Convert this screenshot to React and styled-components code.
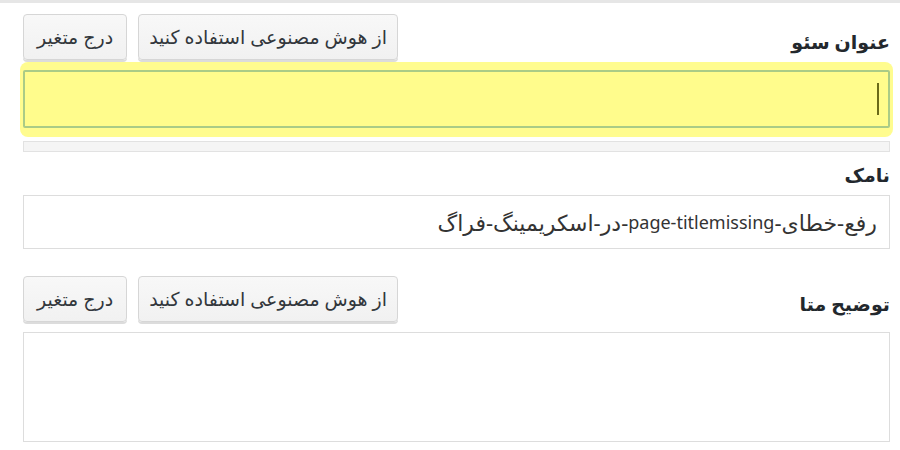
import React from 'react';
import styled, { createGlobalStyle } from 'styled-components';

// page reset and base font
const GlobalStyle = createGlobalStyle`
  html, body {
    margin: 0;
    padding: 0;
    background: #fff;
  }
  body {
    font-family: "Noto Sans", "DejaVu Sans", sans-serif;
    color: #23282d;
  }
`;

// <FieldTools>: the two helper buttons over a field
const FieldTools = () => (
  <Tools>
    <ToolButton>از هوش مصنوعی استفاده کنید</ToolButton>
    <ToolButton $pad={13}>درج متغیر</ToolButton>
  </Tools>
);

function App() {
  return (
    <>
      <GlobalStyle />
      <Page dir="rtl">
        <TopEdge />
        <Form>
          <Field>
            <FieldHead>
              <Label>عنوان سئو</Label>
              <FieldTools />
            </FieldHead>
            <Halo>
              <TitleBox role="textbox">
                <Caret />
              </TitleBox>
            </Halo>
            <Meter />
          </Field>

          <Field $gap={9}>
            <Label $block>نامک</Label>
            <SlugBox>
              رفع-خطای-<Latin>page-titlemissing</Latin>-در-اسکریمینگ-فراگ
            </SlugBox>
          </Field>

          <Field $gap={26}>
            <FieldHead>
              <Label>توضیح متا</Label>
              <FieldTools />
            </FieldHead>
            <MetaArea />
          </Field>
        </Form>
      </Page>
    </>
  );
}

// styles
const Page = styled.div`
  width: 900px;
  height: 450px;
  overflow: hidden;
  box-sizing: border-box;
`;

const TopEdge = styled.div`
  height: 3px;
  background: #e6e6e6;
`;

const Form = styled.div`
  display: flex;
  flex-direction: column;
  padding: 10px 10px 0 23px;
`;

const Field = styled.div`
  display: flex;
  flex-direction: column;
  margin-top: ${p => (p.$gap ? p.$gap + 'px' : 0)};
`;

const FieldHead = styled.div`
  display: flex;
  align-items: center;
  height: 48px;
`;

const Label = styled.div`
  font-size: 19px;
  font-weight: 600;
  line-height: 28px;
  color: #23282d;
  padding-top: ${p => (p.$block ? 0 : '10px')};
  margin-bottom: ${p => (p.$block ? '6px' : 0)};
`;

const Tools = styled.div`
  display: flex;
  gap: 11px;
  margin-right: auto;
`;

const ToolButton = styled.button`
  font-family: inherit;
  font-size: 19px;
  color: #32373c;
  height: 46px;
  padding: 0 ${p => (p.$pad || 10)}px;
  background: linear-gradient(#f8f8f8, #f1f1f1);
  border: 1px solid #d6d6d6;
  border-radius: 4px;
  box-shadow: 0 2px 0 #dcdcdc;
  cursor: pointer;
`;

const Halo = styled.div`
  margin: 1px -3px 0;
  padding: 8px 3px 9px;
  background: #fffc8f;
  border-radius: 8px;
`;

const TitleBox = styled.div`
  display: flex;
  align-items: center;
  height: 58px;
  box-sizing: border-box;
  padding: 0 9px;
  background: #fffc8c;
  border: 2px solid #aacb86;
  border-radius: 2px;
`;

const Caret = styled.span`
  width: 2px;
  height: 32px;
  background: #6a6a18;
`;

const Meter = styled.div`
  margin-top: 4px;
  height: 11px;
  box-sizing: border-box;
  background: #f5f5f5;
  border: 1px solid #e2e2e2;
`;

const SlugBox = styled.div`
  display: flex;
  align-items: center;
  height: 54px;
  box-sizing: border-box;
  padding: 0 12px;
  font-size: 22px;
  color: #333;
  border: 1px solid #dddddd;
  background: #fff;
  white-space: pre;
`;

const Latin = styled.span`
  font-size: 18px;
`;

const MetaArea = styled.div`
  margin-top: 9px;
  height: 110px;
  box-sizing: border-box;
  border: 1px solid #dddddd;
  background: #fff;
`;

export default App;
